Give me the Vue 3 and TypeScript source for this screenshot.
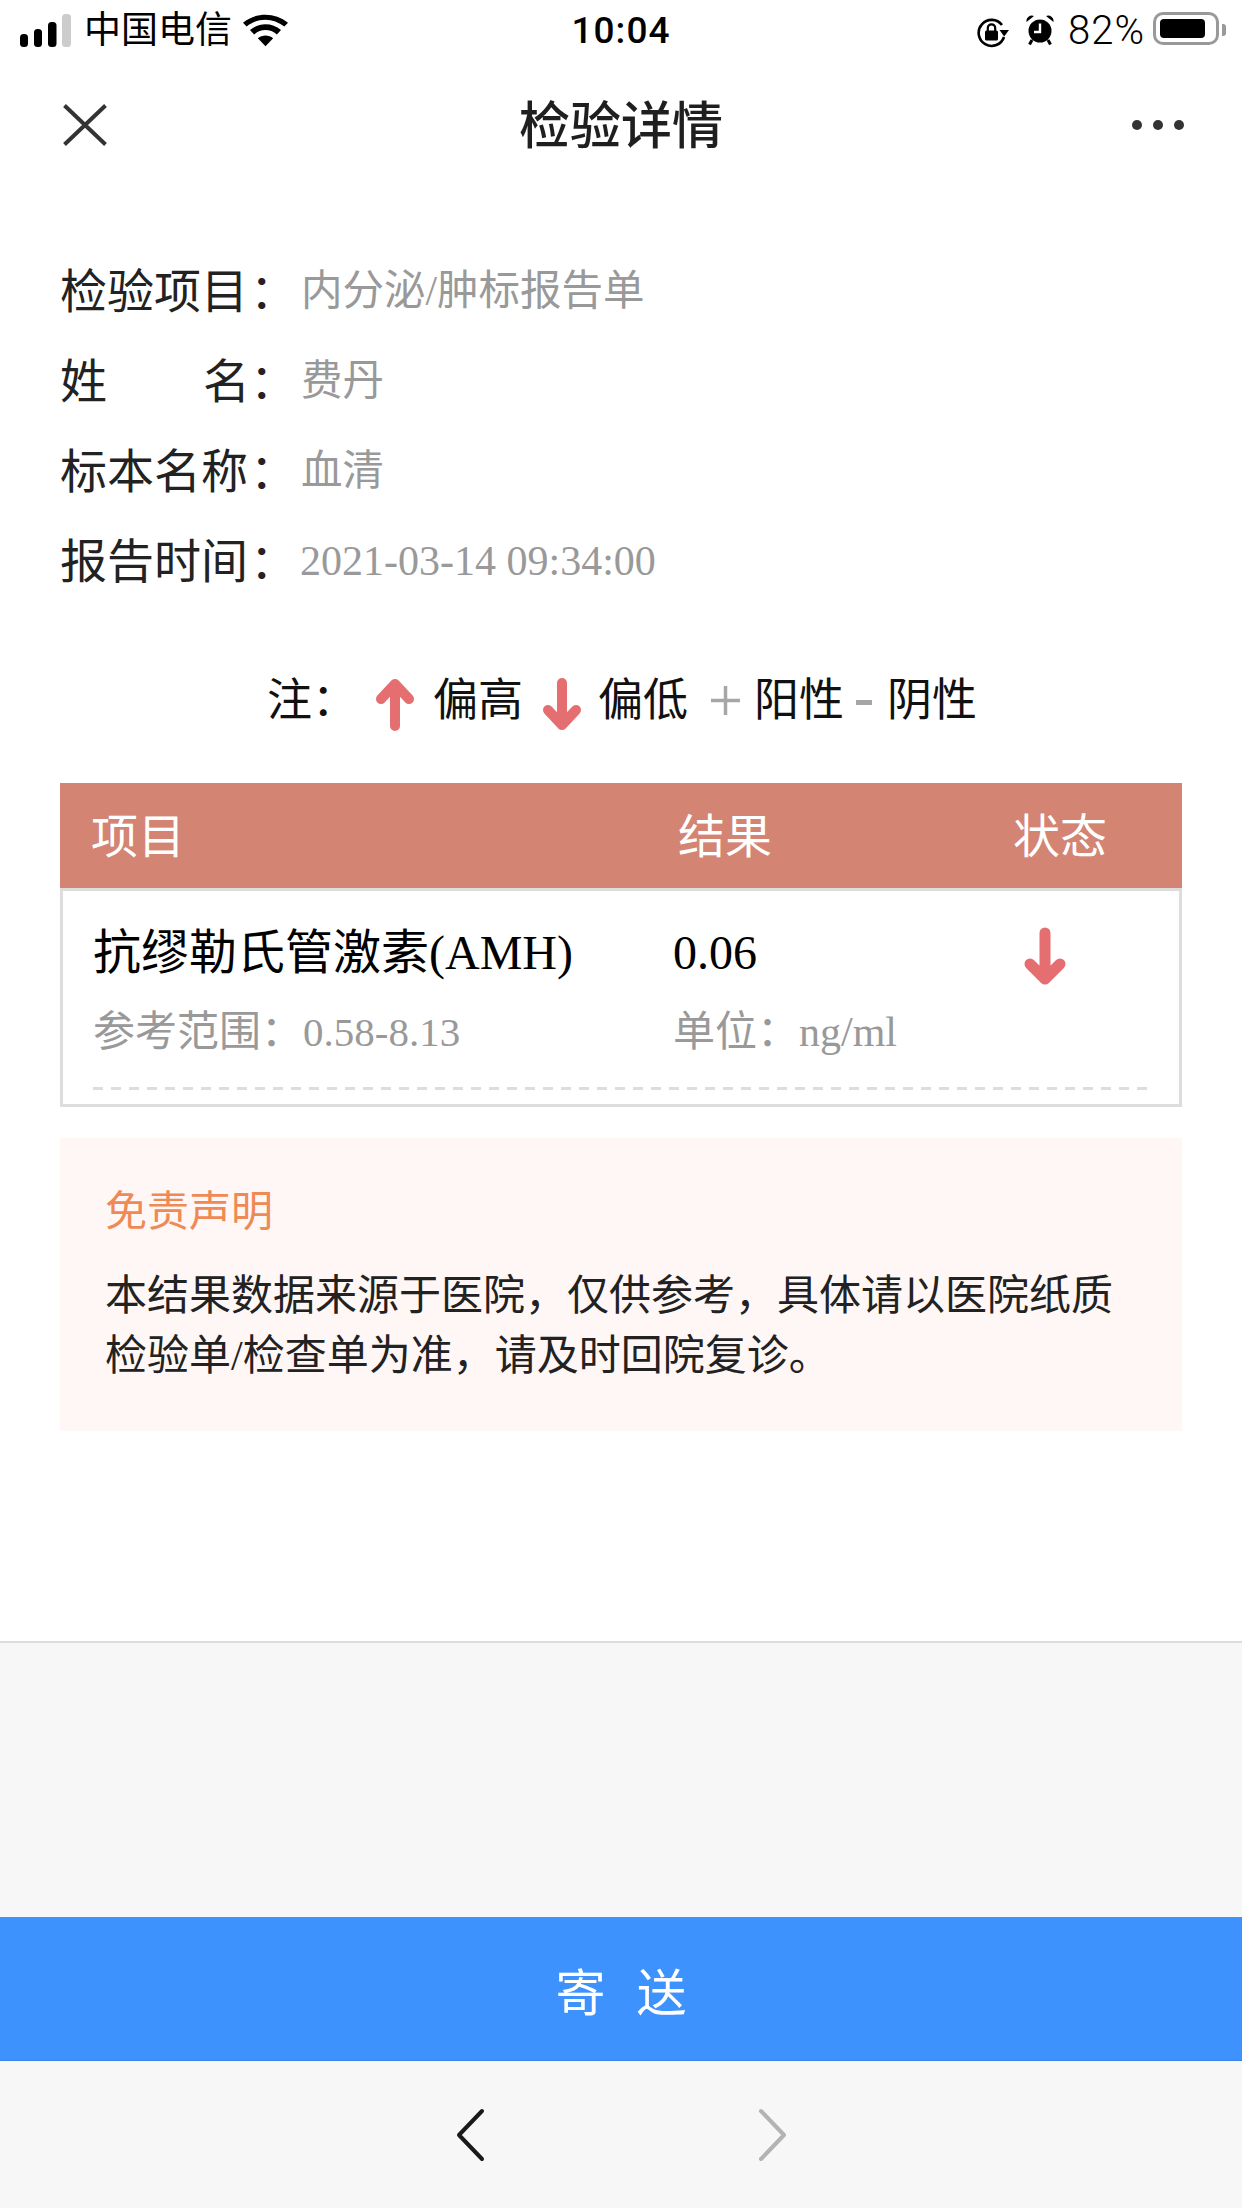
<script setup lang="ts">
const rows: { label: string; value: string; latin?: boolean }[] = [
  { label: '检验项目', value: '内分泌/肿标报告单' },
  { label: '姓名', value: '费丹' },
  { label: '标本名称', value: '血清' },
  { label: '报告时间', value: '2021-03-14 09:34:00', latin: true },
]
</script>

<template>
  <div class="page">
    <header class="status">
      <div class="status-left">
        <svg viewBox="0 0 51 33" width="51" height="33">
          <rect x="0" y="20" width="8" height="13" rx="3.5" fill="#000" />
          <rect x="14" y="15" width="8" height="18" rx="3.5" fill="#000" />
          <rect x="28" y="8" width="8.5" height="25" rx="3.5" fill="#000" />
          <rect x="42" y="0" width="9" height="33" rx="3.5" fill="#ccc" />
        </svg>
        <span class="carrier">中国电信</span>
        <svg class="wifi" viewBox="0 0 47 33" width="45" height="33">
          <path d="M23.5 33 L15.5 24.6 C20 20.6 27 20.6 31.5 24.6 Z" fill="#000" />
          <path d="M11.6 20.6 L7.3 16 C16.5 7.8 30.5 7.8 39.7 16 L35.4 20.6 C28.5 14.6 18.5 14.6 11.6 20.6 Z" fill="#000" />
          <path d="M3.8 12.4 L0 8.4 C13.5 -2.8 33.5 -2.8 47 8.4 L43.2 12.4 C31.5 2.8 15.5 2.8 3.8 12.4 Z" fill="#000" />
        </svg>
      </div>
      <div class="time">10:04</div>
      <div class="status-right">
        <svg class="lock" viewBox="0 0 32 30" width="32" height="30">
          <path d="M27 19 A13 13 0 1 1 25 7" fill="none" stroke="#000" stroke-width="2.6" />
          <path d="M22.5 12 L32 12 L27.2 18.5 Z" fill="#000" />
          <rect x="8" y="12.5" width="13" height="10" rx="1.5" fill="#000" />
          <path d="M10.8 13 V10 A3.7 3.7 0 0 1 18.2 10 V13" fill="none" stroke="#000" stroke-width="2.2" />
        </svg>
        <svg class="alarm" viewBox="0 0 28 30" width="28" height="30">
          <circle cx="14" cy="16" r="11.5" fill="#000" />
          <path d="M0.5 7 A5.5 5.5 0 0 1 8 1 Z M27.5 7 A5.5 5.5 0 0 0 20 1 Z" fill="#000" />
          <path d="M6 25 L3.5 29.5 M22 25 L24.5 29.5" stroke="#000" stroke-width="3" />
          <path d="M14 8.5 V17 H8" fill="none" stroke="#fff" stroke-width="2.4" />
        </svg>
        <span class="pct">82%</span>
        <div class="battery"><div class="battery-fill"></div></div>
        <div class="battery-cap"></div>
      </div>
    </header>

    <nav class="nav">
      <svg viewBox="0 0 44 42" width="44" height="42">
        <path d="M1.5 1.5 L42.5 40.5 M42.5 1.5 L1.5 40.5" stroke="#333" stroke-width="4" fill="none" />
      </svg>
      <h1 class="title">检验详情</h1>
      <div class="dots"><i></i><i></i><i></i></div>
    </nav>

    <main class="content">
      <section class="info">
        <div v-for="r in rows" :key="r.label" class="info-row">
          <span class="label-text">
            <template v-if="r.label === '姓名'"><span>姓</span><span>名</span></template>
            <template v-else>{{ r.label }}</template>
          </span>
          <span class="colon">：</span>
          <span class="value" :class="{ 'value-latin': r.latin }">{{ r.value }}</span>
        </div>
      </section>

      <section class="legend">
        <span class="legend-note">注：</span>
        <svg class="arrow" viewBox="0 0 38 53" width="38" height="53">
          <path d="M19 48 V6 M5 21 L19 6 L33 21" fill="none" stroke="#e56e70" stroke-width="10" stroke-linecap="round" stroke-linejoin="round" />
        </svg>
        <span class="lg-high">偏高</span>
        <svg class="arrow arrow-down" viewBox="0 0 38 53" width="38" height="53">
          <path d="M19 5 V47 M5 32 L19 47 L33 32" fill="none" stroke="#e56e70" stroke-width="10" stroke-linecap="round" stroke-linejoin="round" />
        </svg>
        <span class="lg-low">偏低</span>
        <svg class="plus" viewBox="0 0 29 29" width="29" height="29">
          <path d="M0 14.5 H29 M14.5 0 V29" stroke="#a6a6a6" stroke-width="3.5" />
        </svg>
        <span class="lg-pos">阳性</span>
        <span class="minus"></span>
        <span class="lg-neg">阴性</span>
      </section>

      <section class="table">
        <div class="thead">
          <span class="c1">项目</span>
          <span class="c2">结果</span>
          <span class="c3">状态</span>
        </div>
        <div class="tbody">
          <div class="row-main">
            <div class="cell-a">
              <div class="name">抗缪勒氏管激素(AMH)</div>
              <div class="sub">参考范围：<span class="range">0.58-8.13</span></div>
            </div>
            <div class="cell-b">
              <div class="name">0.06</div>
              <div class="sub">单位：<span>ng/ml</span></div>
            </div>
            <svg class="row-arrow" viewBox="0 0 42 59" width="42" height="59">
              <path d="M21 6 V52 M6 37 L21 52 L36 37" fill="none" stroke="#e56e70" stroke-width="11" stroke-linecap="round" stroke-linejoin="round" />
            </svg>
          </div>
          <div class="dash"></div>
        </div>
      </section>

      <section class="notice">
        <div class="notice-title">免责声明</div>
        <p class="notice-text">本结果数据来源于医院，仅供参考，具体请以医院纸质<br />检验单/检查单为准，请及时回院复诊。</p>
      </section>
    </main>

    <div class="spacer"></div>
    <button class="send">寄 送</button>
    <footer class="toolbar">
      <svg viewBox="0 0 30 54" width="30" height="54">
        <path d="M27 3 L4 27 L27 51" fill="none" stroke="#1a1a1a" stroke-width="4" stroke-linecap="round" stroke-linejoin="round" />
      </svg>
      <svg viewBox="0 0 30 54" width="30" height="54">
        <path d="M3 3 L26 27 L3 51" fill="none" stroke="#b3b3b3" stroke-width="4" stroke-linecap="round" stroke-linejoin="round" />
      </svg>
    </footer>
  </div>
</template>

<style>
html, body { margin: 0; background: #fff; }
</style>

<style scoped>
.page {
  width: 1242px;
  height: 2208px;
  display: flex;
  flex-direction: column;
  background: #f7f7f7;
  overflow: hidden;
  font-family: "Liberation Serif", "Noto Sans CJK SC", serif;
  color: #000;
}
.status {
  height: 60px;
  flex: none;
  background: #fff;
  display: grid;
  grid-template-columns: 1fr auto 1fr;
  align-items: center;
  padding: 0 16px 0 20px;
  font-family: "Noto Sans CJK SC", sans-serif;
  box-sizing: border-box;
}
.status-left { display: flex; align-items: center; }
.carrier { font-size: 37px; margin-left: 13px; line-height: 54px; padding-bottom: 6px; }
.wifi { margin-left: 11px; }
.time {
  font-family: Roboto, sans-serif;
  font-size: 37px;
  font-weight: 500;
  letter-spacing: 1px;
  margin-right: 4px;
}
.status-right { display: flex; align-items: center; justify-content: flex-end; }
.lock { margin-top: 5px; }
.alarm { margin-left: 17px; }
.pct { font-family: Roboto, sans-serif; font-size: 40px; font-weight: 300; letter-spacing: 1px; margin-left: 14px; }
.battery {
  width: 66px;
  height: 33px;
  border: 3px solid #999;
  border-radius: 10px;
  box-sizing: border-box;
  padding: 4px;
  margin-left: 8px;
  margin-bottom: 3px;
}
.battery-fill { width: 45px; height: 100%; background: #000; border-radius: 4px; }
.battery-cap {
  width: 4px;
  height: 12px;
  background: #999;
  border-radius: 0 3px 3px 0;
  margin-left: 3px;
}
.nav {
  height: 130px;
  flex: none;
  background: #fff;
  display: flex;
  align-items: center;
  justify-content: space-between;
  padding: 0 58px 0 63px;
  position: relative;
}
.title {
  margin: 0;
  padding-bottom: 6px;
  font-family: "Noto Sans CJK SC", sans-serif;
  font-size: 51px;
  font-weight: 500;
  color: #1f1f1f;
  position: absolute;
  left: 0;
  right: 0;
  text-align: center;
}
.dots { display: flex; gap: 11px; }
.dots i { width: 10px; height: 10px; border-radius: 50%; background: #333; display: block; }
.content {
  background: #fff;
  height: 1453px;
  flex: none;
  padding: 52px 60px 0;
  box-sizing: border-box;
  border-bottom: 2px solid #dcdcdc;
}
.info-row {
  height: 90px;
  display: flex;
  align-items: center;
}
.label-text {
  width: 190px;
  display: flex;
  justify-content: space-between;
  font-size: 47px;
  color: #222;
}
.colon { width: 51px; font-size: 47px; color: #222; }
.value { font-size: 41.5px; color: #999; }
.value-latin { font-size: 42px; padding-top: 8px; margin-left: -1px; }
.legend {
  height: 70px;
  margin-top: 59px;
  display: flex;
  align-items: center;
  font-size: 45px;
  color: #111;
  padding-left: 207px;
}
.legend-note { width: 109px; }
.arrow { margin-top: 17px; }
.lg-high { margin-left: 19px; }
.arrow-down { margin-left: 20px; }
.lg-low { margin-left: 17px; }
.plus { margin-left: 23px; margin-top: 8px; }
.lg-pos { margin-left: 14px; }
.minus { width: 16px; height: 5px; background: #a6a6a6; margin: 12px 15px 0 12px; }
.table { margin-top: 52px; }
.thead {
  height: 105px;
  background: #d38473;
  color: #fff;
  font-size: 47px;
  display: flex;
  align-items: center;
  padding: 0 0 6px 31px;
  box-sizing: border-box;
}
.c1 { width: 587px; }
.c2 { width: 335px; }
.tbody {
  height: 219px;
  border: 3px solid #ddd;
  box-sizing: border-box;
  background: #fff;
  padding: 0 30px;
}
.row-main { height: 196px; display: flex; position: relative; }
.cell-a { width: 580px; }
.cell-b { flex: 1; }
.name { font-size: 48px; height: 62px; line-height: 62px; margin-top: 31px; }
.sub { font-size: 42px; color: #999; margin-top: 18px; height: 60px; line-height: 60px; }
.range { font-size: 41px; }
.row-arrow { position: absolute; left: 931px; top: 36px; }
.dash {
  height: 3px;
  background: repeating-linear-gradient(90deg, #ddd 0 10px, transparent 10px 18px);
}
.notice {
  margin-top: 31px;
  height: 293px;
  background: #fff7f5;
  padding: 43px 45px 0;
  box-sizing: border-box;
}
.notice-title { font-size: 42px; color: #ee8a55; line-height: 62px; }
.notice-text { margin: 23px 0 0; font-size: 42px; line-height: 60px; color: #222; }
.spacer { flex: 1; }
.send {
  flex: none;
  height: 144px;
  border: 0;
  border-bottom: 1px solid #3a82e8;
  background: #3e92fe;
  color: #fff;
  font-family: "Noto Sans CJK SC", sans-serif;
  font-size: 50px;
  word-spacing: 20px;
  padding: 0;
  display: block;
  width: 100%;
}
.toolbar {
  height: 147px;
  flex: none;
  background: #f7f7f7;
  display: flex;
  justify-content: center;
  gap: 273px;
  padding-top: 47px;
  box-sizing: border-box;
  align-items: flex-start;
}
</style>
